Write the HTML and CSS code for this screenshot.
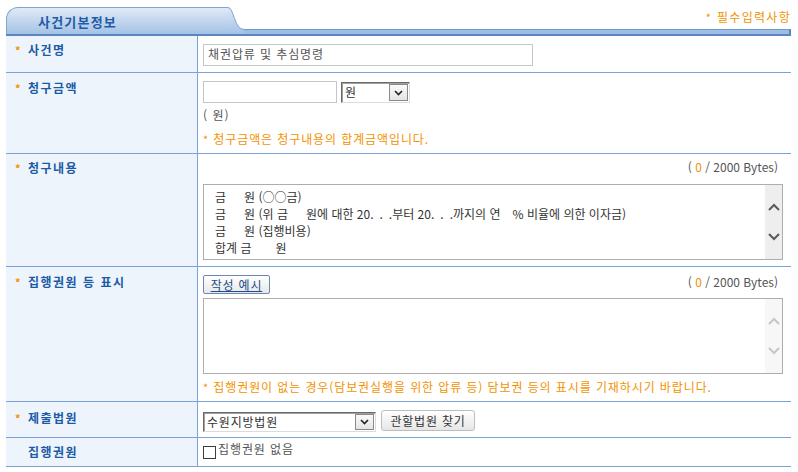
FILE: index.html
```html
<!DOCTYPE html>
<html lang="ko">
<head>
<meta charset="utf-8">
<title>사건기본정보</title>
<link rel="stylesheet" href="styles.css">
</head>
<body>
<div class="page">
  <div class="head">
    <div class="tab">사건기본정보</div>
    <svg class="curve" width="16" height="27" viewBox="0 0 16 27">
      <defs>
        <linearGradient id="tg" x1="0" y1="0" x2="0" y2="1">
          <stop offset="0" stop-color="#e0eaf6"/>
          <stop offset="1" stop-color="#a4c2e6"/>
        </linearGradient>
      </defs>
      <path d="M0 0 C6 0 6 22 16 22 L16 27 L0 27 Z" fill="url(#tg)"/>
      <path d="M0 0.5 C6 0.5 6 22.5 16 22.5" fill="none" stroke="#7fa5d3" stroke-width="1"/>
    </svg>
    <div class="head-rest">
      <div class="req"><span class="req-ast">*</span> 필수입력사항</div>
      <div class="bar"></div>
    </div>
  </div>

  <div class="form">
    <div class="lbl p7"><span class="ast">*</span>사건명</div>
    <div class="fld">
      <input class="txt txt-long" type="text" value="채권압류 및 추심명령">
    </div>

    <div class="lbl p8"><span class="ast">*</span>청구금액</div>
    <div class="fld">
      <div class="line">
        <input class="txt txt-short" type="text" value="">
        <span class="select sel-won">
          <span class="sel-val">원</span>
          <span class="sel-arrow"><svg width="9" height="6" viewBox="0 0 9 6"><polyline points="1,1 4.5,4.5 8,1" fill="none" stroke="#222" stroke-width="1.6"/></svg></span>
        </span>
      </div>
      <div class="unit">( 원)</div>
      <div class="note note-won"><span class="note-ast">*</span> 청구금액은 청구내용의 합계금액입니다.</div>
    </div>

    <div class="lbl p7"><span class="ast">*</span>청구내용</div>
    <div class="fld">
      <div class="bytes bytes-solo">( <span class="cnt">0</span> / 2000 Bytes)</div>
      <div class="ta">
        <div class="ta-body">금&#8194;&#8194;&#8194;원 (○○금)
금&#8194;&#8194;&#8194;원 (위 금&#8194;&#8194;&#8194;원에 대한 20.&#8194;.&#8194;.부터 20.&#8194;.&#8194;.까지의 연&#8194;&#8194;% 비율에 의한 이자금)
금&#8194;&#8194;&#8194;원 (집행비용)
합계 금&#8194;&#8194;&#8194;&#8194;원</div>
        <div class="sb">
          <svg width="12" height="8" viewBox="0 0 12 8"><polyline points="1,7 6,2 11,7" fill="none" stroke="#5a5a5a" stroke-width="2"/></svg>
          <svg width="12" height="8" viewBox="0 0 12 8"><polyline points="1,1 6,6 11,1" fill="none" stroke="#5a5a5a" stroke-width="2"/></svg>
        </div>
      </div>
    </div>

    <div class="lbl p8"><span class="ast">*</span>집행권원 등 표시</div>
    <div class="fld">
      <div class="line between">
        <button class="btn btn-ex" type="button">작성 예시</button>
        <div class="bytes">( <span class="cnt">0</span> / 2000 Bytes)</div>
      </div>
      <div class="ta ta-empty">
        <div class="ta-body"></div>
        <div class="sb sb-off">
          <svg width="12" height="8" viewBox="0 0 12 8"><polyline points="1,7 6,2 11,7" fill="none" stroke="#c6c6c6" stroke-width="2"/></svg>
          <svg width="12" height="8" viewBox="0 0 12 8"><polyline points="1,1 6,6 11,1" fill="none" stroke="#c6c6c6" stroke-width="2"/></svg>
        </div>
      </div>
      <div class="note note-ta"><span class="note-ast">*</span> 집행권원이 없는 경우(담보권실행을 위한 압류 등) 담보권 등의 표시를 기재하시기 바랍니다.</div>
    </div>

    <div class="lbl p9"><span class="ast">*</span>제출법원</div>
    <div class="fld">
      <div class="line court">
        <span class="select sel-court">
          <span class="sel-val">수원지방법원</span>
          <span class="sel-arrow"><svg width="9" height="6" viewBox="0 0 9 6"><polyline points="1,1 4.5,4.5 8,1" fill="none" stroke="#222" stroke-width="1.6"/></svg></span>
        </span>
        <button class="btn btn-court" type="button">관할법원 찾기</button>
      </div>
    </div>

    <div class="lbl p7"><span class="ast ast-none">*</span>집행권원</div>
    <div class="fld">
      <label class="chk"><span class="box"></span><span>집행권원 없음</span></label>
    </div>
  </div>
</div>
</body>
</html>
```

FILE: styles.css
```css
* { box-sizing: border-box; }
html, body { margin: 0; padding: 0; background: #fff; }
body {
  font-family: "Noto Sans CJK KR", "Noto Sans", sans-serif;
  font-size: 12px;
  line-height: 14px;
  color: #555;
}
.page { padding: 0 7px 0 6px; width: 798px; }

/* header */
.head {
  display: flex;
  align-items: flex-end;
  height: 36px;
  border-bottom: 2px solid #5a87c2;
}
.tab {
  width: 222px;
  height: 27px;
  border-top: 1px solid #7fa5d3;
  border-left: 1px solid #7fa5d3;
  border-top-left-radius: 12px;
  background: linear-gradient(#e0eaf6, #a4c2e6);
  padding: 6px 0 0 31px;
  font-size: 13px;
  line-height: 16px;
  font-weight: bold;
  letter-spacing: 1.2px;
  color: #1f5ba7;
}
.curve { display: block; flex: none; }
.head-rest { flex: 1; display: flex; flex-direction: column; }
.req {
  text-align: right;
  color: #f39200;
  padding-right: 0;
  margin-bottom: 5px;
  letter-spacing: 1.3px;
}
.req-ast { font-size: 11px; }
.bar {
  height: 5px;
  background: #9dbde3;
  border-top: 1px solid #6f9bd0;
  border-right: 2px solid #5a87c2;
}

/* form grid */
.form {
  display: grid;
  grid-template-columns: 191px 1fr;
  grid-template-rows: 37px 81px 113px 135px 36px 29px;
}
.lbl {
  background: #eef4fc;
  border-bottom: 1px solid #7ba3da;
  padding-left: 9px;
  font-weight: bold;
  letter-spacing: 1.5px;
  color: #1c5aa6;
}
.p6 { padding-top: 6px; }
.p7 { padding-top: 7px; }
.p8 { padding-top: 8px; }
.p9 { padding-top: 9px; }
.ast {
  display: inline-block;
  width: 13px;
  color: #f39200;
  font-size: 11px;
  font-weight: bold;
  letter-spacing: 0;
}
.ast-none { visibility: hidden; }
.fld {
  border-left: 1px solid #7ba3da;
  border-bottom: 1px solid #7ba3da;
  padding: 8px 8px 0 5px;
}

.txt {
  display: block;
  height: 22px;
  border: 1px solid #c6c6c6;
  padding: 0 4px 3px;
  margin: 0;
  font: inherit;
  letter-spacing: 0.9px;
  color: #555;
  background: #fff;
  outline: none;
}
.txt-long { width: 330px; }
.txt-short { width: 134px; }

.line { display: flex; align-items: flex-start; gap: 4px; }
.between { justify-content: space-between; }

.select {
  display: inline-flex;
  align-items: stretch;
  height: 21px;
  border: 1px solid;
  border-color: #6a6a6a #dcdcdc #dcdcdc #6a6a6a;
  box-shadow: inset 1px 1px 0 #a0a0a0;
  background: #fff;
  color: #333;
  letter-spacing: 0.8px;
}
.sel-won { width: 69px; margin-top: 1px; }
.sel-court { width: 173px; height: 20px; margin-top: 2px; }
.sel-val { flex: 1; padding: 1px 0 0 3px; line-height: 16px; }
.sel-arrow {
  width: 19px;
  margin: 1px 1px 1px 0;
  border: 1px solid #8a8a8a;
  background: linear-gradient(#fafafa, #e4e4e4);
  display: flex;
  align-items: center;
  justify-content: center;
}

.unit { margin-top: 5px; color: #555; letter-spacing: 1px; }
.note { color: #f39200; letter-spacing: 0.9px; }
.note-won { margin-top: 10px; }
.note-ta { margin-top: 6px; }
.note-ast { font-size: 11px; }

.bytes { text-align: right; padding-right: 5px; color: #555; }
.bytes-solo { margin-top: -2px; }
.cnt { color: #f39200; }

.ta {
  display: flex;
  height: 76px;
  border: 1px solid #adadad;
  margin-top: 10px;
  background: #fff;
}
.ta-empty { margin-top: 4px; }
.ta-body {
  flex: 1;
  padding: 3px 8px 0 11px;
  white-space: pre;
  line-height: 17px;
  color: #333;
  overflow: hidden;
}
.sb {
  width: 17px;
  background: #eeeeee;
  display: flex;
  flex-direction: column;
  align-items: center;
  justify-content: center;
  gap: 22px;
  padding-bottom: 1px;
}
.sb-off { background: #f7f7f7; }
.sb svg { display: block; }

.btn {
  font: inherit;
  margin: 0;
  cursor: pointer;
  letter-spacing: 0.8px;
}
.btn-ex {
  width: 67px;
  height: 19px;
  padding: 0;
  border: 1px solid #6d87b0;
  border-radius: 2px;
  background: linear-gradient(#ffffff, #e8e8e8);
  color: #1f4d8c;
  text-decoration: underline;
  line-height: 15px;
}
.btn-court {
  width: 94px;
  height: 21px;
  padding: 0;
  border: 1px solid #bdbdbd;
  border-radius: 3px;
  background: linear-gradient(#ffffff, #e6e6e6);
  color: #333;
  line-height: 17px;
}
.court { gap: 5px; }

.chk {
  display: flex;
  align-items: flex-start;
  gap: 2px;
  margin-top: -4px;
  color: #555;
  letter-spacing: 0.9px;
}
.box {
  width: 13px;
  height: 13px;
  margin-top: 4px;
  border: 1px solid #3c3c3c;
  background: #fff;
  flex: none;
}
```
